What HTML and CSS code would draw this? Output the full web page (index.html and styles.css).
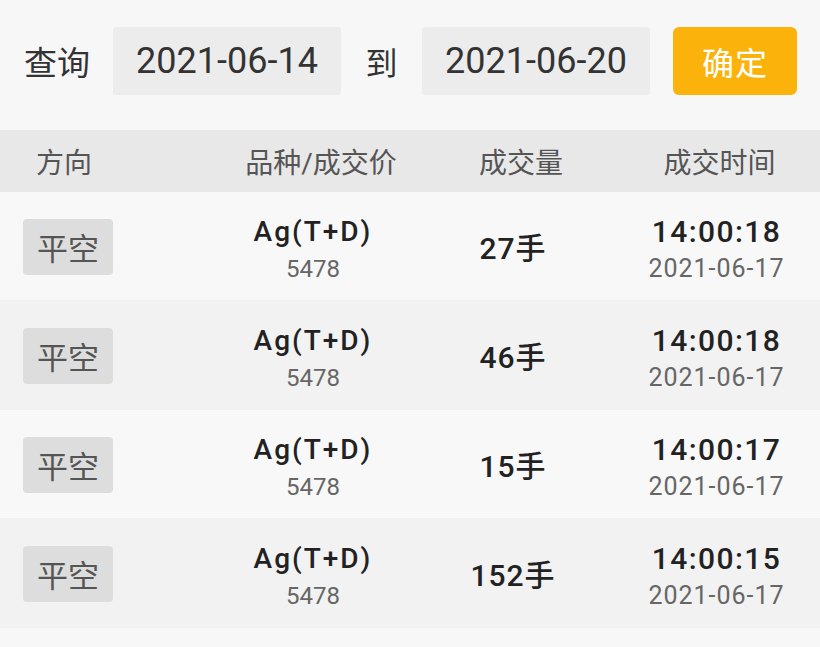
FILE: index.html
```html
<!DOCTYPE html>
<html lang="zh-CN">
<head>
<meta charset="utf-8">
<title>成交查询</title>
<link rel="stylesheet" href="styles.css">
</head>
<body>
<div class="page">
  <div class="query">
    <span class="query-label">查询</span>
    <div class="date-box">2021-06-14</div>
    <span class="query-to">到</span>
    <div class="date-box">2021-06-20</div>
    <button class="confirm">确定</button>
  </div>

  <div class="table">
    <div class="row head">
      <div class="cell c1">方向</div>
      <div class="cell c2">品种/成交价</div>
      <div class="cell c3">成交量</div>
      <div class="cell c4">成交时间</div>
    </div>

    <div class="row item">
      <div class="cell c1"><span class="tag">平空</span></div>
      <div class="cell c2"><div class="main">Ag(T+D)</div><div class="sub">5478</div></div>
      <div class="cell c3"><span class="vol">27手</span></div>
      <div class="cell c4"><div class="time">14:00:18</div><div class="sub date">2021-06-17</div></div>
    </div>

    <div class="row item alt">
      <div class="cell c1"><span class="tag">平空</span></div>
      <div class="cell c2"><div class="main">Ag(T+D)</div><div class="sub">5478</div></div>
      <div class="cell c3"><span class="vol">46手</span></div>
      <div class="cell c4"><div class="time">14:00:18</div><div class="sub date">2021-06-17</div></div>
    </div>

    <div class="row item">
      <div class="cell c1"><span class="tag">平空</span></div>
      <div class="cell c2"><div class="main">Ag(T+D)</div><div class="sub">5478</div></div>
      <div class="cell c3"><span class="vol">15手</span></div>
      <div class="cell c4"><div class="time">14:00:17</div><div class="sub date">2021-06-17</div></div>
    </div>

    <div class="row item alt">
      <div class="cell c1"><span class="tag">平空</span></div>
      <div class="cell c2"><div class="main">Ag(T+D)</div><div class="sub">5478</div></div>
      <div class="cell c3"><span class="vol">152手</span></div>
      <div class="cell c4"><div class="time">14:00:15</div><div class="sub date">2021-06-17</div></div>
    </div>
  </div>
</div>
</body>
</html>
```

FILE: styles.css
```css
* { box-sizing: border-box; }

html, body {
  margin: 0;
  padding: 0;
  background: #f7f7f7;
}

body {
  font-family: Roboto, "Noto Sans CJK SC", "Noto Sans", sans-serif;
  color: #222;
  width: 820px;
  height: 647px;
  overflow: hidden;
}

.query {
  display: flex;
  align-items: center;
  height: 68px;
  margin-top: 27px;
  padding-left: 24px;
}

.query-label {
  font-size: 33px;
  color: #333;
  width: 89px;
}

.date-box {
  width: 228px;
  height: 68px;
  background: #ececec;
  border-radius: 3px;
  display: flex;
  align-items: center;
  justify-content: center;
  font-size: 36px;
  color: #333;
}

.query-to {
  font-family: "Noto Sans CJK SC", sans-serif;
  font-size: 32px;
  color: #333;
  width: 81px;
  text-align: center;
}

.confirm {
  margin-left: 23px;
  width: 124px;
  height: 68px;
  border: none;
  border-radius: 6px;
  background: #fbb30b;
  color: #fff;
  font-family: "Noto Sans CJK SC", sans-serif;
  font-size: 32px;
  letter-spacing: 1px;
  padding: 0;
}

.table {
  margin-top: 35px;
}

.row {
  display: grid;
  grid-template-columns: 190px 200px 200px 207px;
  padding-left: 23px;
  align-items: center;
}

.head {
  height: 62px;
  background: #e8e8e8;
  font-size: 28px;
  color: #555;
}

.head .c1 { padding-left: 13px; text-align: left; }
.head .c2 { padding-left: 16px; }
.head .c3 { padding-left: 16px; }
.head .c4 { padding-left: 6px; }

.item {
  height: 109px;
  background: #f8f8f8;
  border-bottom: 1px solid #f0f0f0;
}

.item.alt {
  background: #f2f2f2;
}

.cell {
  text-align: center;
}

.c1 { text-align: left; }

.item .c2,
.item .c4 {
  padding-top: 6px;
}

.tag {
  display: inline-flex;
  align-items: center;
  justify-content: center;
  width: 90px;
  height: 56px;
  background: #dddddd;
  border-radius: 4px;
  font-size: 31px;
  color: #555;
  margin-top: 1px;
}

.main {
  font-size: 28px;
  font-weight: 500;
  letter-spacing: 2px;
  line-height: 36px;
  color: #222;
}

.sub {
  font-size: 24px;
  line-height: 32px;
  color: #666;
  margin-top: 3px;
}

.time {
  font-size: 30px;
  font-weight: 500;
  letter-spacing: 1.4px;
  line-height: 36px;
  color: #222;
}

.date {
  font-size: 25px;
  letter-spacing: 1px;
}

.vol {
  font-size: 30px;
  font-weight: 500;
  letter-spacing: 1px;
  color: #222;
}
```
